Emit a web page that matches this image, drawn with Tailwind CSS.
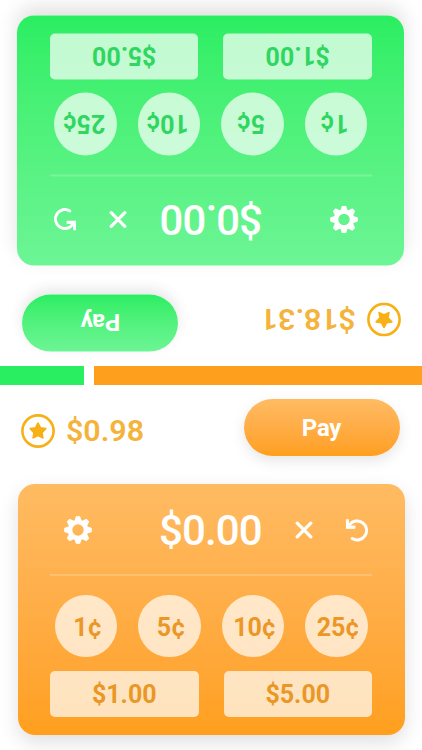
<!DOCTYPE html>
<html lang="en">
<head>
<meta charset="utf-8">
<title>Pay</title>
<script src="https://cdn.jsdelivr.net/npm/@tailwindcss/browser@4"></script>
</head>
<body class="bg-white">
<svg class="hidden" xmlns="http://www.w3.org/2000/svg">
  <symbol id="star" viewBox="0 0 34 34">
    <circle cx="17" cy="17" r="15.6" fill="none" stroke="currentColor" stroke-width="2.6"/>
    <path d="M17 9.2 L19.4 14 L24.7 14.7 L20.9 18.5 L21.8 23.8 L17 21.4 L12.2 23.8 L13.1 18.5 L9.3 14.7 L14.6 14 Z" fill="currentColor" stroke="currentColor" stroke-width="1.8" stroke-linejoin="round"/>
  </symbol>
  <symbol id="gear" viewBox="-14 -14 28 28">
    <circle r="8" fill="none" stroke="currentColor" stroke-width="4.6"/>
    <g fill="currentColor" stroke="currentColor" stroke-width="1.2" stroke-linejoin="round">
      <path id="tooth" d="M-3 -9 L-1.6 -13.2 H1.6 L3 -9 Z"/>
      <use href="#tooth" transform="rotate(45)"/>
      <use href="#tooth" transform="rotate(90)"/>
      <use href="#tooth" transform="rotate(135)"/>
      <use href="#tooth" transform="rotate(180)"/>
      <use href="#tooth" transform="rotate(225)"/>
      <use href="#tooth" transform="rotate(270)"/>
      <use href="#tooth" transform="rotate(315)"/>
    </g>
  </symbol>
  <symbol id="clear" viewBox="0 0 18 18">
    <path d="M2.2 2.2 L15.8 15.8 M15.8 2.2 L2.2 15.8" fill="none" stroke="currentColor" stroke-width="3.2" stroke-linecap="round"/>
  </symbol>
  <symbol id="undo" viewBox="0 0 24 24">
    <path d="M4.6 6.6 A9.5 9.5 0 1 1 7.2 20.6" fill="none" stroke="currentColor" stroke-width="2.9" stroke-linecap="round"/>
    <path d="M2.4 2.4 V9.2 H9.6" fill="none" stroke="currentColor" stroke-width="2.9"/>
    <path d="M1 1.2 H3.8 V7.8 H10.4 V10.6 H1 Z" fill="currentColor"/>
  </symbol>
</svg>
<main class="flex h-[750px] w-[422px] flex-col overflow-hidden font-['Roboto',sans-serif]">

  <section class="flex h-[365.5px] rotate-180 flex-col pt-[14px]">
    <div class="flex h-[57px] items-center justify-between pl-[21px] pr-[22.5px]">
      <div class="flex items-center pt-[7px] text-[#f4b33a]">
        <svg class="size-[34px] text-[#f7b016]"><use href="#star"/></svg>
        <span class="ml-[11px] pt-px text-[30.4px] leading-[36px] font-semibold">$18.31</span>
      </div>
      <button class="h-[57px] w-[156px] rounded-full bg-linear-to-b from-[#6cf595] to-[#2aee62] pt-[2px] text-[24px] font-bold tracking-[-0.2px] text-white shadow-[0_5px_14px_rgba(0,0,0,0.1)]">Pay</button>
    </div>
    <div class="mx-[17.5px] mt-[28.5px] flex h-[250.5px] flex-col rounded-[17px] bg-linear-to-b from-[#6cf595] to-[#2aee62] px-[32.5px] text-white shadow-[0_8px_20px_rgba(0,0,0,0.12)]">
      <div class="flex h-[91.5px] items-center border-b-2 border-white/20 pt-[3px] pl-[13.5px] pr-[3px]">
        <svg class="size-[28px]"><use href="#gear"/></svg>
        <span class="ml-[67.5px] w-[104px] pt-[2px] text-[42px] leading-[48px] font-medium tracking-[-0.9px]">$0.00</span>
        <svg class="ml-[32px] size-[18px]"><use href="#clear"/></svg>
        <svg class="ml-auto size-[24px]"><use href="#undo"/></svg>
      </div>
      <div class="mt-[19px] flex justify-between px-[4.5px] text-[25px] font-bold text-[#2fd660]">
        <div class="flex size-[62.5px] items-center justify-center rounded-full bg-white/70 pt-[3px] pl-[4px]">1¢</div>
        <div class="flex size-[62.5px] items-center justify-center rounded-full bg-white/70 pt-[3px] pl-[4px]">5¢</div>
        <div class="flex size-[62.5px] items-center justify-center rounded-full bg-white/70 pt-[3px] pl-[4px]">10¢</div>
        <div class="flex size-[62.5px] items-center justify-center rounded-full bg-white/70 pt-[3px] pl-[4px]">25¢</div>
      </div>
      <div class="mt-[13.5px] flex justify-between text-[25px] font-bold text-[#2fd660]">
        <div class="flex h-[46px] w-[148.5px] items-center justify-center rounded-[5px] bg-white/70 pt-[3px]">$1.00</div>
        <div class="flex h-[46px] w-[148.5px] items-center justify-center rounded-[5px] bg-white/70 pt-[3px]">$5.00</div>
      </div>
    </div>
  </section>

  <div class="flex h-[19px] shrink-0 gap-[10px]">
    <div class="w-[84px] bg-[#2aee62]"></div>
    <div class="flex-1 bg-[#ff9f1e]"></div>
  </div>

  <section class="flex h-[365.5px] flex-col pt-[14px]">
    <div class="flex h-[57px] items-center justify-between pl-[21px] pr-[22.5px]">
      <div class="flex items-center pt-[7px] text-[#f4b33a]">
        <svg class="size-[34px] text-[#f7b016]"><use href="#star"/></svg>
        <span class="ml-[11px] pt-px text-[30.4px] leading-[36px] font-semibold">$0.98</span>
      </div>
      <button class="h-[57px] w-[156px] rounded-full bg-linear-to-b from-[#ffbb62] to-[#ff9f1c] pt-[2px] text-[24px] font-bold tracking-[-0.2px] text-white shadow-[0_5px_14px_rgba(0,0,0,0.1)]">Pay</button>
    </div>
    <div class="mx-[17.5px] mt-[28.5px] flex h-[250.5px] flex-col rounded-[17px] bg-linear-to-b from-[#ffbb62] to-[#ff9f1c] px-[32.5px] text-white shadow-[0_8px_20px_rgba(0,0,0,0.12)]">
      <div class="flex h-[91.5px] items-center border-b-2 border-white/20 pt-[3px] pl-[13.5px] pr-[3px]">
        <svg class="size-[28px]"><use href="#gear"/></svg>
        <span class="ml-[67.5px] w-[104px] pt-[2px] text-[42px] leading-[48px] font-medium tracking-[-0.9px]">$0.00</span>
        <svg class="ml-[32px] size-[18px]"><use href="#clear"/></svg>
        <svg class="ml-auto size-[24px]"><use href="#undo"/></svg>
      </div>
      <div class="mt-[19px] flex justify-between px-[4.5px] text-[25px] font-bold text-[#ea9726]">
        <div class="flex size-[62.5px] items-center justify-center rounded-full bg-white/70 pt-[3px] pl-[4px]">1¢</div>
        <div class="flex size-[62.5px] items-center justify-center rounded-full bg-white/70 pt-[3px] pl-[4px]">5¢</div>
        <div class="flex size-[62.5px] items-center justify-center rounded-full bg-white/70 pt-[3px] pl-[4px]">10¢</div>
        <div class="flex size-[62.5px] items-center justify-center rounded-full bg-white/70 pt-[3px] pl-[4px]">25¢</div>
      </div>
      <div class="mt-[13.5px] flex justify-between text-[25px] font-bold text-[#ea9726]">
        <div class="flex h-[46px] w-[148.5px] items-center justify-center rounded-[5px] bg-white/70 pt-[3px]">$1.00</div>
        <div class="flex h-[46px] w-[148.5px] items-center justify-center rounded-[5px] bg-white/70 pt-[3px]">$5.00</div>
      </div>
    </div>
  </section>
</main>
</body>
</html>
